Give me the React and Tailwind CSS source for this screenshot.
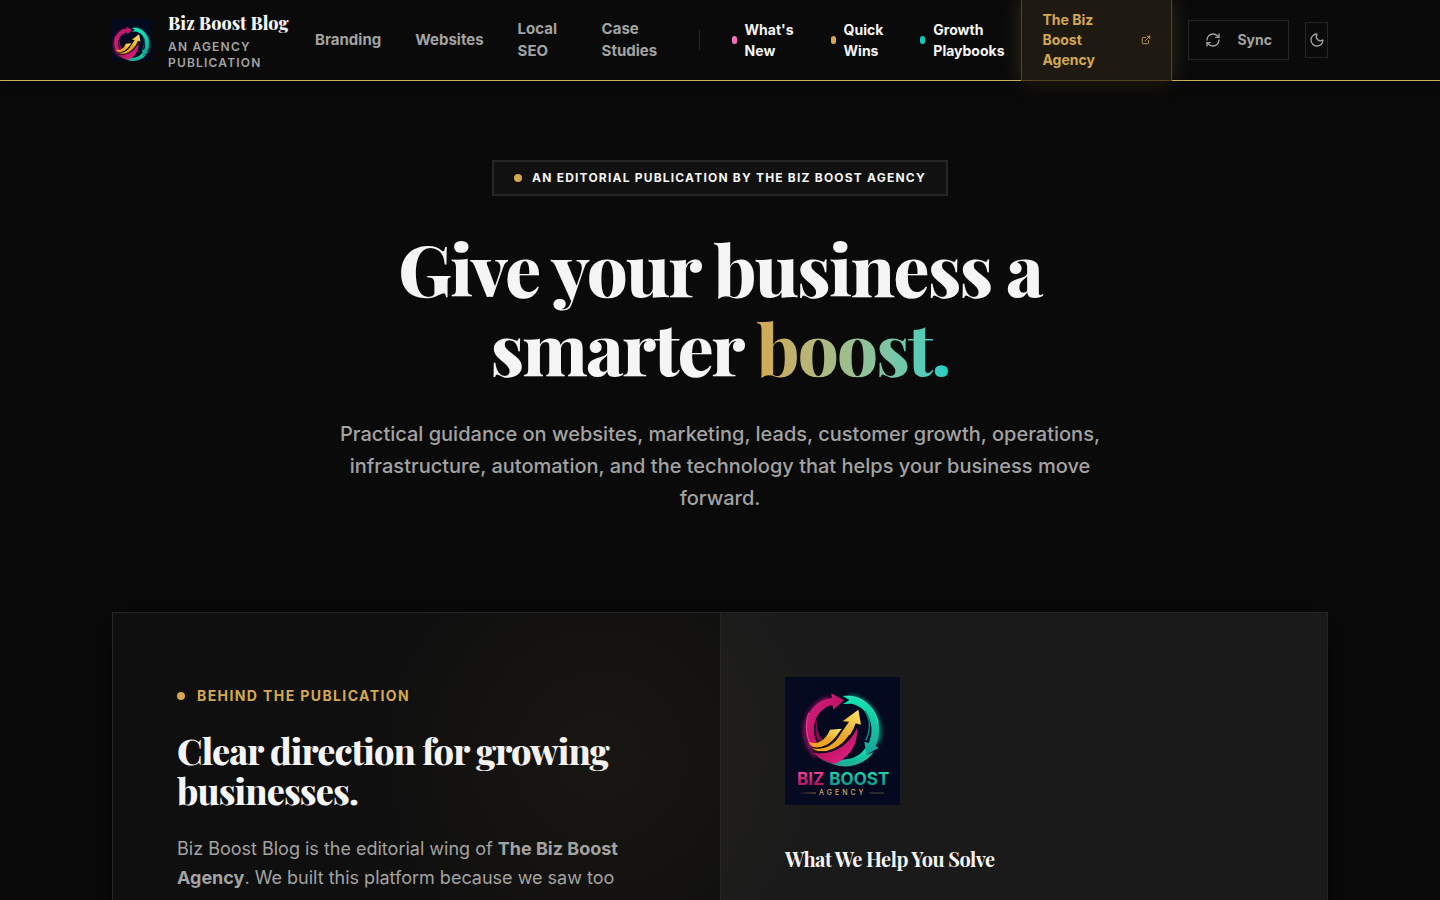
import React from "react";
import { ExternalLink, Moon, RefreshCw } from "lucide-react";

const topics = [
    { label: "Branding", href: "#branding", width: "" },
    { label: "Websites", href: "#websites", width: "" },
    { label: "Local SEO", href: "#local-seo", width: "w-[50px]" },
    { label: "Case Studies", href: "#case-studies", width: "w-16" },
];

const series = [
    { label: "What's New", href: "#new", dot: "bg-[#f472b6]" },
    { label: "Quick Wins", href: "#wins", dot: "bg-[#d4a853]" },
    { label: "Growth Playbooks", href: "#playbooks", dot: "bg-[#14c8b8]" },
];

export default function App() {
    return (
        <div className="h-screen overflow-hidden bg-[#0a0a0a] font-['Inter',sans-serif] text-[#f5f5f5]">
            <Header />
            <main className="mx-auto max-w-7xl px-8">
                <Hero />
                <About />
            </main>
        </div>
    );
}

function Header() {
    return (
        <header className="relative border-b border-[#c9ae5c] shadow-[0_4px_12px_rgba(0,0,0,0.5)]">
            <div className="mx-auto flex h-20 max-w-7xl items-center px-8">
                <a href="#home" className="flex shrink-0 items-center gap-4">
                    <Logo id="mark" viewBox="92 51 255 268" className="h-[42px] w-10" />
                    <span className="flex w-[121px] flex-col gap-1 pt-px">
                        <span className="font-['Playfair_Display','Liberation_Serif',serif] text-lg/6 font-extrabold whitespace-nowrap">
                            Biz Boost Blog
                        </span>
                        <span className="text-xs/4 font-semibold tracking-widest text-[#a3a3a3] uppercase">
                            An Agency Publication
                        </span>
                    </span>
                </a>

                <nav className="ml-[26px] flex items-center text-[#a3a3a3]">
                    <div className="flex items-center gap-[34px]">
                        {topics.map((t) => (
                            <a key={t.label} href={t.href} className={`text-[15px]/[22px] font-bold ${t.width}`}>
                                {t.label}
                            </a>
                        ))}
                    </div>
                    <span className="ml-[33px] h-5 w-px bg-[#262626]" />
                    <div className="ml-8 flex items-center gap-[37px] text-[#f5f5f5]">
                        {series.map((s) => (
                            <a key={s.label} href={s.href} className="flex items-center gap-2 text-sm/[21px] font-bold">
                                <span className={`h-2 w-[5px] rounded-full ${s.dot}`} />
                                <span className="w-min">{s.label}</span>
                            </a>
                        ))}
                    </div>
                </nav>

                <div className="ml-auto flex shrink-0 items-center gap-4">
                    <a
                        href="#agency"
                        className="flex w-[151px] items-center justify-between border border-[#d4a853]/30 bg-[#1e1a12] px-5 py-[10px] text-sm/5 font-bold text-[#d4a853] shadow-[0_0_20px_rgba(212,168,83,0.2)]"
                    >
                        <span className="w-[60px]">The Biz Boost Agency</span>
                        <ExternalLink size={10} />
                    </a>
                    <button className="flex h-10 items-center gap-4 border border-[#262626] px-4 text-sm font-bold text-[#a3a3a3]">
                        <RefreshCw size={16} />
                        Sync
                    </button>
                    <button
                        aria-label="Toggle theme"
                        className="flex h-9 w-[23px] items-center justify-center border border-[#262626] text-[#a3a3a3]"
                    >
                        <Moon size={16} className="shrink-0" />
                    </button>
                </div>
            </div>
        </header>
    );
}

function Hero() {
    return (
        <section className="flex flex-col items-center pt-[79px] text-center">
            <p className="flex items-center gap-[10px] border-2 border-[#262626] bg-[#111111] px-5 py-2 text-xs/4 font-bold tracking-widest uppercase">
                <span className="size-2 rounded-full bg-[#d4a853]" />
                An editorial publication by The Biz Boost Agency
            </p>
            <h1 className="mt-8 max-w-4xl font-['Playfair_Display','Liberation_Serif',serif] text-[72px]/[79px] font-extrabold tracking-tight">
                Give your business a
                <br />
                smarter{" "}
                <span className="bg-linear-to-r from-[#d4a853] to-[#14d0c4] bg-clip-text text-transparent">boost.</span>
            </h1>
            <p className="mt-8 max-w-3xl text-xl/8 font-medium text-[#a3a3a3]">
                Practical guidance on websites, marketing, leads, customer growth, operations, infrastructure,
                automation, and the technology that helps your business move forward.
            </p>
        </section>
    );
}

function About() {
    return (
        <section className="relative mt-[98px] grid grid-cols-2 overflow-hidden border border-[#262626] bg-[#0f0f0f] shadow-[0_8px_32px_rgba(0,0,0,0.5)]">
            <div className="px-16 py-[72px]">
                <p className="flex items-center gap-3 text-sm/[22px] font-bold tracking-widest text-[#d4a853] uppercase">
                    <span className="size-2 rounded-full bg-[#d4a853]" />
                    Behind the publication
                </p>
                <h2 className="mt-[23px] font-['Playfair_Display','Liberation_Serif',serif] text-4xl/10 font-extrabold tracking-tight">
                    Clear direction for growing businesses.
                </h2>
                <p className="mt-6 text-lg/[29px] text-[#a3a3a3]">
                    Biz Boost Blog is the editorial wing of <strong>The Biz Boost Agency</strong>. We built this
                    platform because we saw too
                </p>
            </div>
            <div className="border-l border-[#262626] bg-[#1a1a1a] p-16">
                <Logo id="full" viewBox="45 51 345 384" className="h-32 w-[115px]" wordmark />
                <h3 className="mt-10 font-['Playfair_Display','Liberation_Serif',serif] text-xl/7 font-bold tracking-tight">
                    What We Help You Solve
                </h3>
            </div>

            {/* Gold glow across both columns */}
            <div className="pointer-events-none absolute -top-24 left-1/2 size-[480px] -translate-x-3/4 bg-[radial-gradient(circle,rgba(212,168,83,0.05),transparent_70%)]" />
        </section>
    );
}

function Logo({ id, viewBox, className, wordmark = false }) {
    return (
        <svg viewBox={viewBox} className={className} role="img" aria-label="Biz Boost Agency">
            <defs>
                <linearGradient id={`${id}-pink`} x1="0" y1="0" x2="1" y2="1">
                    <stop offset="0" stopColor="#d6207f" />
                    <stop offset="0.5" stopColor="#c21468" />
                    <stop offset="1" stopColor="#f0268a" />
                </linearGradient>
                <linearGradient id={`${id}-teal`} x1="0" y1="0" x2="0" y2="1">
                    <stop offset="0" stopColor="#14e6b0" />
                    <stop offset="1" stopColor="#14a396" />
                </linearGradient>
                <linearGradient id={`${id}-gold`} x1="0" y1="1" x2="1" y2="0">
                    <stop offset="0" stopColor="#f8a81f" />
                    <stop offset="0.5" stopColor="#e9a427" />
                    <stop offset="1" stopColor="#ffe76b" />
                </linearGradient>
                <linearGradient id={`${id}-biz`} x1="0" y1="0" x2="0" y2="1">
                    <stop offset="0.2" stopColor="#f0409a" />
                    <stop offset="0.8" stopColor="#b3145f" />
                </linearGradient>
                <linearGradient id={`${id}-boost`} x1="0" y1="0" x2="0" y2="1">
                    <stop offset="0.2" stopColor="#1fd3b0" />
                    <stop offset="0.8" stopColor="#10988c" />
                </linearGradient>
                <linearGradient id={`${id}-rule`}>
                    <stop offset="0" stopColor="#c99b4a" stopOpacity="0.2" />
                    <stop offset="1" stopColor="#c99b4a" />
                </linearGradient>
                <filter id={`${id}-glow`} x="-20%" y="-20%" width="140%" height="140%">
                    <feGaussianBlur stdDeviation="6" />
                </filter>
            </defs>
            <rect x="0" y="0" width="450" height="480" fill="#040920" />
            <g filter={`url(#${id}-glow)`} fill="none" strokeWidth="8" opacity="0.85">
                <path d="M175 113A105 105 0 0 0 140 290" stroke="#ec1683" />
                <path d="M238 108A108 108 0 0 1 322 250" stroke="#10d7b0" />
            </g>
            {/* Teal half */}
            <path
                d="M218 108C275 102 323 146 327 202Q329 234 317 258L326 263L289 285L283 245L296 249C316 205 302 145 245 131L219 132L238 120Z"
                fill={`url(#${id}-teal)`}
            />
            <path d="M215 299C250 298 272 285 286 264L290 285L312 276C280 316 231 331 185 310Z" fill={`url(#${id}-teal)`} />
            <path d="M285 153Q311 194 287 241" fill="none" stroke="#087e7b" strokeWidth="5" />
            {/* Pink half */}
            <path
                d="M184 100L222 121L190 149L187 135C133 148 119 211 144 253L123 265C86 196 119 120 185 114Z"
                fill={`url(#${id}-pink)`}
            />
            <path d="M139 187C132 215 139 239 151 250L165 247Q134 216 143 169Z" fill="#7d0c48" />
            <path d="M132 280C201 285 240 248 261 204C265 252 239 292 194 312Q157 304 132 280Z" fill={`url(#${id}-pink)`} />
            <path d="M116 158Q100 203 121 255" fill="none" stroke="#ff5fb2" strokeWidth="2" />
            <path d="M232 108C282 108 319 148 325 191" fill="none" stroke="#6cffe0" strokeWidth="2" />
            <path d="M143 290Q213 342 302 289" fill="none" stroke="#9eb984" strokeWidth="1" />
            {/* Gold arrows */}
            <path d="M117 245C149 259 171 231 180 209L215 206C195 235 176 262 139 264Q123 260 117 245Z" fill={`url(#${id}-gold)`} />
            <path d="M122 260C160 277 194 254 212 221L237 185L218 184L265 149L273 194L257 190C244 228 216 265 178 272Q141 281 122 260Z" fill={`url(#${id}-gold)`} />
            <path d="M124 262C158 271 187 250 205 226" fill="none" stroke="#231019" strokeWidth="4" />
            <path d="M130 273C173 285 218 259 239 225" fill="none" stroke="#231019" strokeWidth="4" />
            {wordmark && (
                <g>
                    <g fontFamily="Inter, sans-serif" fontWeight="700" fontSize="51">
                        <text x="81" y="374" fill={`url(#${id}-biz)`}>
                            BIZ
                        </text>
                        <text x="178" y="374" fill={`url(#${id}-boost)`}>
                            BOOST
                        </text>
                    </g>
                    <text x="147" y="406" fontFamily="Inter, sans-serif" fontWeight="500" fontSize="21" letterSpacing="9" fill="#d5ae69">
                        AGENCY
                    </text>
                    <path d="M92 398h46v2h-46z" fill={`url(#${id}-rule)`} />
                    <path d="M298 398h44v2h-44z" fill="#806449" />
                </g>
            )}
        </svg>
    );
}
